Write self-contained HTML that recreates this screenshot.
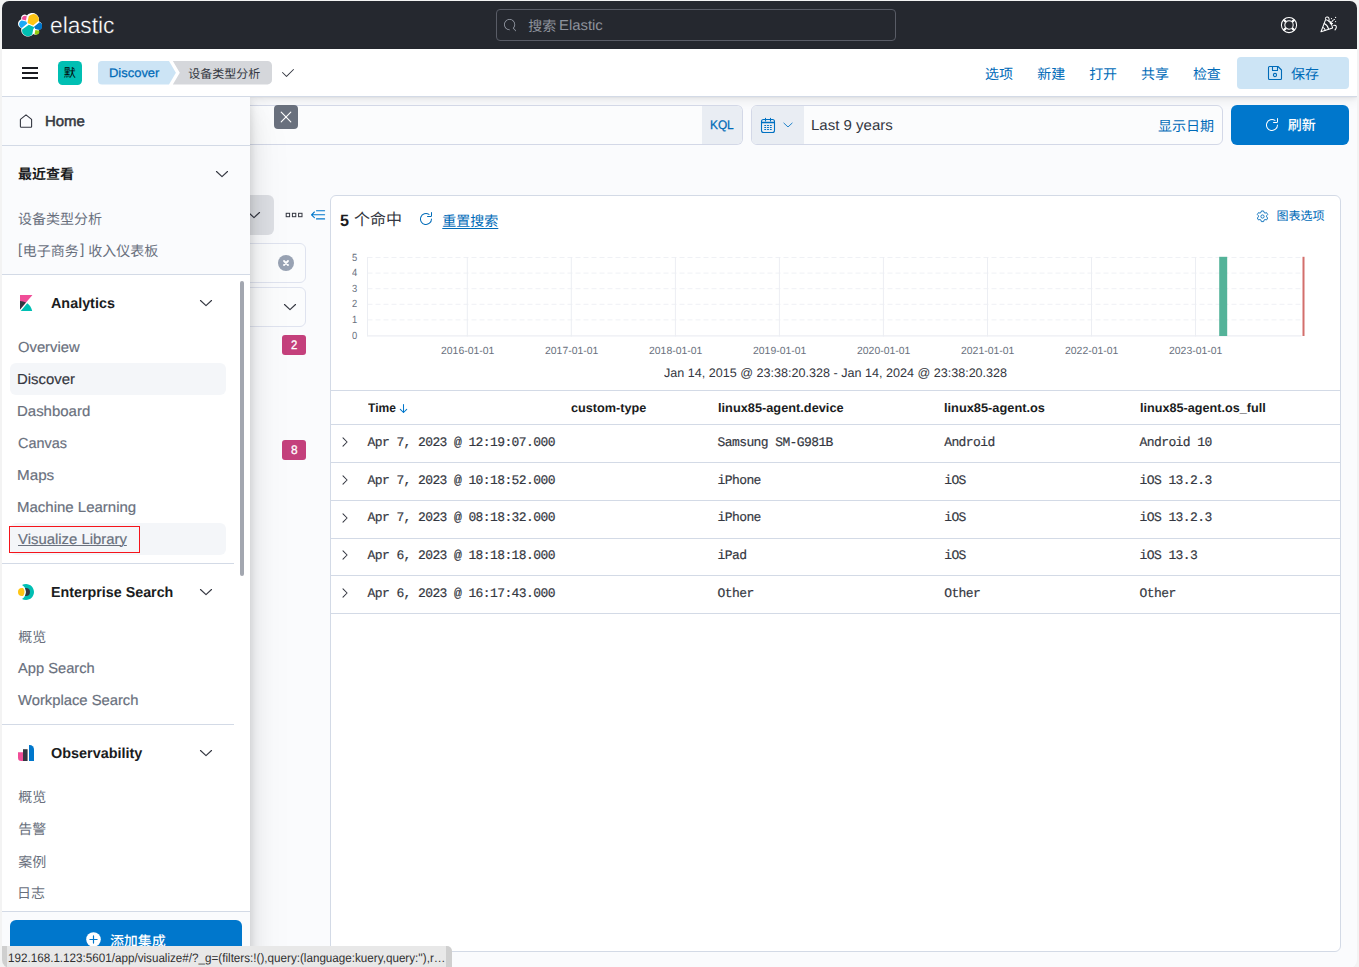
<!DOCTYPE html>
<html lang="zh-CN">
<head>
<meta charset="utf-8">
<title>Discover - 设备类型分析 - Elastic</title>
<style>
html,body{margin:0;padding:0}
body{width:1359px;height:967px;overflow:hidden;position:relative;background:#f3f3f3;font-family:"Liberation Sans",sans-serif;font-size:14px;color:#343741}
#win{position:absolute;left:2px;top:1px;width:1355px;height:967px;border-radius:7px 7px 8px 8px;overflow:hidden;background:#fafbfd}
#app{position:absolute;left:-2px;top:-1px;width:1359px;height:967px}
#app div,#app svg.ic,#app .t,#app .cj{position:absolute;box-sizing:border-box}
.t{text-rendering:geometricPrecision;white-space:pre;transform-origin:0 0;line-height:1;font-family:"Liberation Sans",sans-serif;font-weight:400}
.t.m{font-family:"Liberation Mono",monospace}
.cj{display:block;overflow:visible}
.cjt{text-rendering:geometricPrecision;position:absolute;left:1.5px;top:2px;white-space:pre;line-height:1;font-family:"Liberation Sans","Noto Sans CJK SC",sans-serif}
a{color:inherit;text-decoration:none}

</style>
</head>
<body>
<div id="win"><div id="app">
<div style="left:2px;top:1px;width:1355px;height:48px;background:#25282f"></div>
<div style="left:496px;top:9px;width:400px;height:32px;border:1px solid #595c66;border-radius:4px;background:#25282f"></div>
<svg class="ic" style="left:18px;top:12.8px;" width="24.2" height="24.4" viewBox="2 0 30 32" preserveAspectRatio="none"><path fill="#fff" d="M32 16.77a6.33 6.33 0 0 0-1.14-3.63 6.3 6.3 0 0 0-3.04-2.32c.16-.82.24-1.65.24-2.49a8.26 8.26 0 0 0-1.57-4.87A8.35 8.35 0 0 0 22.4.38a8.3 8.3 0 0 0-5.11-.08 8.29 8.29 0 0 0-4.19 2.94 4.41 4.41 0 0 0-5.42-.13 4.45 4.45 0 0 0-1.59 2.24 4.42 4.42 0 0 0 .03 2.71A6.37 6.37 0 0 0 3.15 10.4 6.37 6.37 0 0 0 2 14.04c-.01 1.31.39 2.59 1.14 3.66a6.33 6.33 0 0 0 3.06 2.32c-.16.82-.24 1.65-.24 2.48a8.25 8.25 0 0 0 1.57 4.86 8.26 8.26 0 0 0 4.12 3.02 8.3 8.3 0 0 0 5.1.07 8.29 8.29 0 0 0 4.18-2.93 4.38 4.38 0 0 0 2.51.95 4.42 4.42 0 0 0 2.68-.79 4.41 4.41 0 0 0 1.6-2.24 4.4 4.4 0 0 0-.02-2.71 6.37 6.37 0 0 0 2.97-2.34A6.36 6.36 0 0 0 32 16.77"/><path fill="#fec514" d="M13.8 13.2l6.9 3.15 7.05-6.17a7.2 7.2 0 0 0 .15-1.5 7.1 7.1 0 0 0-1.26-4.06 7.1 7.1 0 0 0-7.8-2.8 7.13 7.13 0 0 0-3.46 2.4l-1.17 6.06z"/><path fill="#00bfb3" d="M7.2 21.75a7.3 7.3 0 0 0-.15 1.53c0 1.46.45 2.89 1.28 4.09a7.17 7.17 0 0 0 7.86 2.82 7.18 7.18 0 0 0 3.47-2.45l1.16-6.06 1.55-2.96-6.93-3.16z"/><path fill="#f04e98" d="M7.15 8.6l4.73 1.12 1.04-5.38a3.73 3.73 0 0 0-4.44-.08A3.75 3.75 0 0 0 7.15 8.6"/><path fill="#1ba9f5" d="M6.74 9.73a5.3 5.3 0 0 0-2.52 1.92 5.33 5.33 0 0 0-.02 6.14 5.3 5.3 0 0 0 2.57 1.97l6.64-6-1.22-2.6z"/><path fill="#93c90e" d="M22.54 27.65a3.74 3.74 0 0 0 5.76-1.9 3.72 3.72 0 0 0-.01-2.34l-4.72-1.1z"/><path fill="#0077cc" d="M23.5 21.06l5.2 1.21a5.35 5.35 0 0 0 2.54-1.91 5.33 5.33 0 0 0 .02-6.15 5.33 5.33 0 0 0-2.57-1.97l-6.8 5.96z"/></svg>
<span class="t" style="left:50.30px;top:14.20px;font-size:23px;color:#fff;transform:scaleX(0.9893);-webkit-text-stroke:.35px #25282f;">elastic</span>
<svg class="ic" style="left:503.6px;top:19.3px;" width="12.8" height="12.8" viewBox="0 0 16 16" preserveAspectRatio="none"><path fill="#969ba6" d="M11.271 11.978l3.872 3.873a.502.502 0 0 0 .708 0 .502.502 0 0 0 0-.708l-3.565-3.564c2.38-2.747 2.267-6.923-.342-9.532-2.73-2.73-7.17-2.73-9.898 0-2.728 2.729-2.728 7.17 0 9.9a6.955 6.955 0 0 0 4.949 2.05.5.5 0 0 0 0-1 5.96 5.96 0 0 1-4.242-1.757 6.01 6.01 0 0 1 0-8.486 6.004 6.004 0 0 1 8.484 0 6.01 6.01 0 0 1 0 8.486.5.5 0 0 0 .034.738z"/></svg>
<span class="cj" style="left:526.71px;top:16.74px;width:30.59px;height:16.92px"><span class="cjt" style="font-size:14px;color:#8d929c">搜索</span></span>
<span class="t" style="left:558.97px;top:19.40px;font-size:14.5px;color:#8d929c;transform:scaleX(1.0252);">Elastic</span>
<svg class="ic" style="left:1280px;top:16px;" width="18" height="18" viewBox="0 0 18 18" preserveAspectRatio="none"><g fill="none" stroke="#fff"><circle cx="9" cy="9" r="7.6" stroke-width="1.05"/><circle cx="9" cy="9" r="4.2" stroke-width="1.05"/><path d="M5.9 5.9L3.7 3.7M12.1 5.9L14.3 3.7M5.9 12.1L3.7 14.3M12.1 12.1L14.3 14.3" stroke-width="2.3"/></g></svg>
<svg class="ic" style="left:1320px;top:16px;" width="18" height="18" viewBox="0 0 18 18" preserveAspectRatio="none"><g fill="none" stroke="#fff" stroke-width="1.05" stroke-linecap="round" stroke-linejoin="round"><path d="M5.6 3.6C9.4 4.6 11.8 7.6 12.6 11.9L1 15.8Z"/><path d="M4.2 7.6C6.4 8.6 8 10.6 8.6 13.2M2.8 11.4C4 12 4.9 13 5.3 14.3"/><path d="M5.4 2.4C5.6 1 7.8 .4 8.7 1.7C9.3 2.7 9.2 4.2 9 5.4"/><path d="M13.7 9.4C15 8.8 16.7 9.6 16.3 11.4C16.1 12.4 15.6 13.2 15 13.9"/><path d="M13.3 4L10.4 7.5M10.3 5.4L10.3 7.6L12.5 7.6"/></g><g fill="#fff"><circle cx="11.5" cy="2.6" r=".6"/><circle cx="14.4" cy="3.5" r=".6"/><circle cx="15.6" cy="1.4" r=".6"/><circle cx="15.6" cy="5.6" r=".6"/></g></svg>
<div style="left:2px;top:49px;width:1355px;height:48px;background:#fff;border-bottom:1px solid #d3dae6;box-shadow:0 .7px 1.4px rgba(0,0,0,.07),0 1.9px 4px rgba(0,0,0,.05),0 4.5px 10px rgba(0,0,0,.05)"></div>
<div style="left:22px;top:67px;width:16px;height:2px;background:#1a1c21"></div>
<div style="left:22px;top:72px;width:16px;height:2px;background:#1a1c21"></div>
<div style="left:22px;top:77px;width:16px;height:2px;background:#1a1c21"></div>
<div style="left:58px;top:61px;width:24px;height:24px;background:#00bfb3;border-radius:4.5px"></div>
<svg class="ic" style="left:98px;top:61px;" width="180" height="24" viewBox="0 0 180 24" preserveAspectRatio="none"><path d="M4 0H71L77.9 11.7L71 23.4H4A4 4 0 0 1 0 19.4V4A4 4 0 0 1 4 0Z" fill="#cce4f5"/><path d="M74.85 0H169.5A4.5 4.5 0 0 1 174 4.5V18.9A4.5 4.5 0 0 1 169.5 23.4H74.85L81.8 11.7Z" fill="#d5d7db"/></svg>
<div style="left:1237px;top:57px;width:112px;height:32px;background:#cce4f5;border-radius:4px"></div>
<span class="cj" style="left:62.22px;top:65.21px;width:15.36px;height:14.98px"><span class="cjt" style="font-size:12px;color:#000">默</span></span>
<span class="t" style="left:109.25px;top:66.90px;font-size:12.4px;color:#006bb8;transform:scaleX(1.0453);-webkit-text-stroke:0.25px #006bb8;">Discover</span>
<span class="cj" style="left:186.82px;top:65.54px;width:74.96px;height:15.11px"><span class="cjt" style="font-size:12px;color:#343741">设备类型分析</span></span>
<svg class="ic" style="left:280px;top:65px;" width="16" height="16" viewBox="0 0 16 16" preserveAspectRatio="none"><path fill="#343741" d="M6.5 12a.502.502 0 0 1-.354-.146l-4-4a.502.502 0 0 1 .708-.708L6.5 10.793l6.646-6.647a.502.502 0 0 1 .708.708l-7 7A.502.502 0 0 1 6.5 12"/></svg>
<span class="cj" style="left:983.59px;top:64.84px;width:30.82px;height:16.82px"><span class="cjt" style="font-size:14px;color:#006bb8">选项</span></span>
<span class="cj" style="left:1035.65px;top:64.78px;width:30.89px;height:16.94px"><span class="cjt" style="font-size:14px;color:#006bb8">新建</span></span>
<span class="cj" style="left:1087.63px;top:64.78px;width:30.74px;height:16.94px"><span class="cjt" style="font-size:14px;color:#006bb8">打开</span></span>
<span class="cj" style="left:1139.60px;top:64.75px;width:30.60px;height:17.01px"><span class="cjt" style="font-size:14px;color:#006bb8">共享</span></span>
<span class="cj" style="left:1191.38px;top:64.77px;width:31.03px;height:16.96px"><span class="cjt" style="font-size:14px;color:#006bb8">检查</span></span>
<svg class="ic" style="left:1267px;top:65px;" width="16" height="16" viewBox="0 0 16 16" preserveAspectRatio="none"><g fill="none" stroke="#006bb8" stroke-width="1.1" stroke-linejoin="round"><path d="M2.5 1.5H11L14.5 5V13.5A1 1 0 0 1 13.5 14.5H2.5A1 1 0 0 1 1.5 13.5V2.5A1 1 0 0 1 2.5 1.5Z"/><path d="M5.5 1.5V5.5H10.5V1.5"/><circle cx="8" cy="10" r="1.6"/></g></svg>
<span class="cj" style="left:1289.46px;top:64.61px;width:31.08px;height:16.88px"><span class="cjt" style="font-size:14px;color:#006bb8">保存</span></span>
<div style="left:2px;top:105px;width:741px;height:40px;background:#fbfcfd;border:1px solid #d3d8e7;border-left:none;border-radius:0 6px 6px 0"></div>
<div style="left:702px;top:106px;width:40px;height:38px;background:#e9edf3;border-radius:0 5px 5px 0"></div>
<div style="left:751px;top:105px;width:472px;height:40px;background:#fbfcfd;border:1px solid #d3d8e7;border-radius:6px"></div>
<div style="left:752px;top:106px;width:52px;height:38px;background:#e9edf3;border-radius:5px 0 0 5px"></div>
<div style="left:1231px;top:105px;width:118px;height:40px;background:#0077cc;border-radius:6px"></div>
<span class="t" style="left:710.05px;top:119.30px;font-size:12.4px;color:#006bb8;transform:scaleX(0.9539);-webkit-text-stroke:0.3px #006bb8;">KQL</span>
<svg class="ic" style="left:760px;top:117px;" width="16" height="17" viewBox="0 0 16 17" preserveAspectRatio="none"><g fill="none" stroke="#0071c2" stroke-width="1.1"><rect x="1.5" y="2.5" width="13" height="13" rx="2"/><path d="M1.5 5.5H14.5" stroke-width="1.3"/><path d="M5.5 1.4V3.9M10.5 1.4V3.9" stroke-linecap="round"/><path d="M4.3 8.5H6.1M7.1 8.5H8.9M9.9 8.5H11.7M4.3 10.5H6.1M7.1 10.5H8.9M9.9 10.5H11.7M4.3 12.5H6.1M7.1 12.5H8.9M9.9 12.5H11.7" stroke-width="1"/></g></svg>
<svg class="ic" style="left:782px;top:119px;" width="12" height="12" viewBox="0 0 16 16" preserveAspectRatio="none"><path d="M2.5 5.5L8 10.6L13.5 5.5" fill="none" stroke="#0071c2" stroke-width="1.15" stroke-linecap="round" stroke-linejoin="round"/></svg>
<span class="t" style="left:810.96px;top:118.50px;font-size:14.5px;color:#343741;transform:scaleX(1.0356);">Last 9 years</span>
<span class="cj" style="left:1156.59px;top:116.62px;width:58.42px;height:16.77px"><span class="cjt" style="font-size:14px;color:#006bb8">显示日期</span></span>
<svg class="ic" style="left:1264px;top:117px;" width="16" height="16" viewBox="0 0 16 16" preserveAspectRatio="none"><path fill="#fff" d="M11.228 2.942a.5.5 0 1 1-.538.842A5 5 0 1 0 13 8a.5.5 0 1 1 1 0 6 6 0 1 1-2.772-5.058zM14 1.5v3A1.5 1.5 0 0 1 12.5 6h-3a.5.5 0 0 1 0-1h3a.5.5 0 0 0 .5-.5v-3a.5.5 0 1 1 1 0z"/></svg>
<span class="cj" style="left:1286.34px;top:116.48px;width:31.12px;height:17.05px"><span class="cjt" style="font-size:14px;color:#fff;font-weight:500">刷新</span></span>
<div style="left:200px;top:195px;width:74px;height:40px;background:#dddfe4;border-radius:6px"></div>
<div style="left:150px;top:243px;width:156px;height:40px;background:#fbfcfd;border:1px solid #dfe3ef;border-radius:6px"></div>
<div style="left:150px;top:287px;width:156px;height:40px;background:#fbfcfd;border:1px solid #dfe3ef;border-radius:6px"></div>
<div style="left:282px;top:335px;width:24px;height:20px;background:#c4407c;border-radius:3px"></div>
<div style="left:282px;top:440px;width:24px;height:20px;background:#c4407c;border-radius:3px"></div>
<svg class="ic" style="left:246px;top:207px;" width="16" height="16" viewBox="0 0 16 16" preserveAspectRatio="none"><path d="M2.5 5.5L8 10.6L13.5 5.5" fill="none" stroke="#343741" stroke-width="1.15" stroke-linecap="round" stroke-linejoin="round"/></svg>
<svg class="ic" style="left:285px;top:212px;" width="18" height="6" viewBox="0 0 18 6" preserveAspectRatio="none"><g fill="none" stroke="#343741" stroke-width="1"><rect x="1.2" y="1.3" width="3.4" height="3.4"/><rect x="7.4" y="1.3" width="3.4" height="3.4"/><rect x="13.6" y="1.3" width="3.4" height="3.4"/></g></svg>
<svg class="ic" style="left:309px;top:208px;" width="18" height="14" viewBox="0 0 18 14" preserveAspectRatio="none"><g fill="none" stroke="#0077cc" stroke-width="1.1" stroke-linecap="round" stroke-linejoin="round"><path d="M7.5 2.7H15.6M2.6 6.8H15.6M7.5 10.9H15.6M5.4 4L2.5 6.8L5.4 9.6"/></g></svg>
<svg class="ic" style="left:278px;top:255px;" width="16" height="16" viewBox="0 0 16 16" preserveAspectRatio="none"><circle cx="8" cy="8" r="8" fill="#98a2b3"/><path d="M6 6L10 10M10 6L6 10" stroke="#fff" stroke-width="1.8" stroke-linecap="round"/></svg>
<svg class="ic" style="left:282px;top:299px;" width="16" height="16" viewBox="0 0 16 16" preserveAspectRatio="none"><path d="M2.5 5.5L8 10.6L13.5 5.5" fill="none" stroke="#343741" stroke-width="1.15" stroke-linecap="round" stroke-linejoin="round"/></svg>
<span class="t" style="left:290.80px;top:339.00px;font-size:12.4px;color:#fff;transform:scaleX(0.9143);-webkit-text-stroke:0.3px #fff;">2</span>
<span class="t" style="left:290.70px;top:444.00px;font-size:12.4px;color:#fff;transform:scaleX(0.9571);-webkit-text-stroke:0.3px #fff;">8</span>
<div style="left:330px;top:195px;width:1011px;height:757px;background:#fff;border:1px solid #d3dae6;border-radius:6px"></div>
<svg class="ic" style="left:0px;top:0px;" width="1359" height="400" viewBox="0 0 1359 400" preserveAspectRatio="none"><line x1="367.5" y1="257.5" x2="1301.5" y2="257.5" stroke="#eff1f5" stroke-width="1" stroke-dasharray="5 3"/><line x1="367.5" y1="273.1" x2="1301.5" y2="273.1" stroke="#eff1f5" stroke-width="1" stroke-dasharray="5 3"/><line x1="367.5" y1="288.7" x2="1301.5" y2="288.7" stroke="#eff1f5" stroke-width="1" stroke-dasharray="5 3"/><line x1="367.5" y1="304.3" x2="1301.5" y2="304.3" stroke="#eff1f5" stroke-width="1" stroke-dasharray="5 3"/><line x1="367.5" y1="319.9" x2="1301.5" y2="319.9" stroke="#eff1f5" stroke-width="1" stroke-dasharray="5 3"/><line x1="367.5" y1="335.9" x2="1301.5" y2="335.9" stroke="#eceef3" stroke-width="1.2"/><line x1="367.5" y1="257.0" x2="367.5" y2="336.5" stroke="#eceef3" stroke-width="1"/><line x1="467.3" y1="257.0" x2="467.3" y2="336.5" stroke="#eceef3" stroke-width="1"/><line x1="571.3" y1="257.0" x2="571.3" y2="336.5" stroke="#eceef3" stroke-width="1"/><line x1="675.4" y1="257.0" x2="675.4" y2="336.5" stroke="#eceef3" stroke-width="1"/><line x1="779.4" y1="257.0" x2="779.4" y2="336.5" stroke="#eceef3" stroke-width="1"/><line x1="883.4" y1="257.0" x2="883.4" y2="336.5" stroke="#eceef3" stroke-width="1"/><line x1="987.5" y1="257.0" x2="987.5" y2="336.5" stroke="#eceef3" stroke-width="1"/><line x1="1091.5" y1="257.0" x2="1091.5" y2="336.5" stroke="#eceef3" stroke-width="1"/><line x1="1195.5" y1="257.0" x2="1195.5" y2="336.5" stroke="#eceef3" stroke-width="1"/><rect x="1219.2" y="256.8" width="8" height="79.2" fill="#54b399"/><rect x="1302.5" y="256.8" width="2" height="79.2" fill="#d36f6c"/></svg>
<div style="left:331px;top:390px;width:1009px;height:1px;background:#d3dae6"></div>
<div style="left:331px;top:424.2px;width:1009px;height:1px;background:#d3dae6"></div>
<div style="left:331px;top:462.0px;width:1009px;height:1px;background:#d3dae6"></div>
<div style="left:331px;top:499.8px;width:1009px;height:1px;background:#d3dae6"></div>
<div style="left:331px;top:537.6px;width:1009px;height:1px;background:#d3dae6"></div>
<div style="left:331px;top:575.4px;width:1009px;height:1px;background:#d3dae6"></div>
<div style="left:331px;top:613.2px;width:1009px;height:1px;background:#d3dae6"></div>
<span class="t" style="left:340.00px;top:212.80px;font-size:16.5px;color:#1a1c21;font-weight:700;transform:scaleX(0.9778);">5</span>
<span class="cj" style="left:352.56px;top:211.44px;width:49.87px;height:18.93px"><span class="cjt" style="font-size:16px;color:#343741">个命中</span></span>
<svg class="ic" style="left:418px;top:211px;" width="16" height="16" viewBox="0 0 16 16" preserveAspectRatio="none"><path fill="#006bb8" d="M11.228 2.942a.5.5 0 1 1-.538.842A5 5 0 1 0 13 8a.5.5 0 1 1 1 0 6 6 0 1 1-2.772-5.058zM14 1.5v3A1.5 1.5 0 0 1 12.5 6h-3a.5.5 0 0 1 0-1h3a.5.5 0 0 0 .5-.5v-3a.5.5 0 1 1 1 0z"/></svg>
<span class="cj" style="left:440.80px;top:211.54px;width:58.40px;height:16.92px"><span class="cjt" style="font-size:14px;color:#006bb8;text-decoration:underline;text-decoration-thickness:1px;text-underline-offset:1.5px">重置搜索</span></span>
<svg class="ic" style="left:1255.5px;top:209.6px;" width="13" height="13" viewBox="0 0 16 16" preserveAspectRatio="none"><g fill="none" stroke="#006bb8" stroke-width="1.1" stroke-linejoin="round"><path d="M6.6 1.2h2.8l.5 1.9 1.2.7 1.9-.55 1.4 2.4-1.4 1.4v1.4l1.4 1.4-1.4 2.4-1.9-.55-1.2.7-.5 1.9H6.6l-.5-1.9-1.2-.7-1.9.55-1.4-2.4 1.4-1.4V7.05l-1.4-1.4 1.4-2.4 1.9.55 1.2-.7z"/><circle cx="8" cy="8" r="2"/></g></svg>
<span class="cj" style="left:1274.94px;top:208.18px;width:50.52px;height:15.04px"><span class="cjt" style="font-size:12px;color:#006bb8">图表选项</span></span>
<span class="t" style="left:351.80px;top:253.60px;font-size:10.4px;color:#69707d;transform:scaleX(0.9000);">5</span>
<span class="t" style="left:351.80px;top:269.20px;font-size:10.4px;color:#69707d;transform:scaleX(0.9000);">4</span>
<span class="t" style="left:351.80px;top:284.80px;font-size:10.4px;color:#69707d;transform:scaleX(0.9000);">3</span>
<span class="t" style="left:351.80px;top:300.40px;font-size:10.4px;color:#69707d;transform:scaleX(0.9000);">2</span>
<span class="t" style="left:351.80px;top:316.00px;font-size:10.4px;color:#69707d;transform:scaleX(0.9000);">1</span>
<span class="t" style="left:351.80px;top:331.60px;font-size:10.4px;color:#69707d;transform:scaleX(0.9000);">0</span>
<span class="t" style="left:440.70px;top:347.00px;font-size:10.4px;color:#69707d;transform:scaleX(1.0043);">2016-01-01</span>
<span class="t" style="left:544.73px;top:347.00px;font-size:10.4px;color:#69707d;transform:scaleX(1.0043);">2017-01-01</span>
<span class="t" style="left:648.76px;top:347.00px;font-size:10.4px;color:#69707d;transform:scaleX(1.0043);">2018-01-01</span>
<span class="t" style="left:752.79px;top:347.00px;font-size:10.4px;color:#69707d;transform:scaleX(1.0043);">2019-01-01</span>
<span class="t" style="left:856.82px;top:347.00px;font-size:10.4px;color:#69707d;transform:scaleX(1.0043);">2020-01-01</span>
<span class="t" style="left:960.85px;top:347.00px;font-size:10.4px;color:#69707d;transform:scaleX(1.0043);">2021-01-01</span>
<span class="t" style="left:1064.88px;top:347.00px;font-size:10.4px;color:#69707d;transform:scaleX(1.0043);">2022-01-01</span>
<span class="t" style="left:1168.91px;top:347.00px;font-size:10.4px;color:#69707d;transform:scaleX(1.0043);">2023-01-01</span>
<span class="t" style="left:664.10px;top:367.10px;font-size:12.4px;color:#343741;transform:scaleX(1.0153);">Jan 14, 2015 @ 23:38:20.328 - Jan 14, 2024 @ 23:38:20.328</span>
<span class="t" style="left:368.00px;top:402.00px;font-size:12.4px;color:#1a1c21;font-weight:700;transform:scaleX(0.9721);">Time</span>
<svg class="ic" style="left:398px;top:403px;" width="11" height="11" viewBox="0 0 11 11" preserveAspectRatio="none"><path d="M5.5 1.6V9.4M2.3 6.3L5.5 9.5L8.7 6.3" fill="none" stroke="#0077cc" stroke-width="1.05" stroke-linecap="round" stroke-linejoin="round"/></svg>
<span class="t" style="left:570.50px;top:402.00px;font-size:12.4px;color:#1a1c21;font-weight:700;transform:scaleX(1.0234);">custom-type</span>
<span class="t" style="left:718.00px;top:402.00px;font-size:12.4px;color:#1a1c21;font-weight:700;transform:scaleX(1.0304);">linux85-agent.device</span>
<span class="t" style="left:944.00px;top:402.00px;font-size:12.4px;color:#1a1c21;font-weight:700;transform:scaleX(1.0329);">linux85-agent.os</span>
<span class="t" style="left:1139.80px;top:402.00px;font-size:12.4px;color:#1a1c21;font-weight:700;transform:scaleX(1.0196);">linux85-agent.os_full</span>
<svg class="ic" style="left:339px;top:436.0px;" width="12" height="12" viewBox="0 0 12 12" preserveAspectRatio="none"><path d="M4 1.9L8.1 6L4 10.1" fill="none" stroke="#343741" stroke-width="1.05" stroke-linecap="round" stroke-linejoin="round"/></svg>
<span class="t m" style="left:367.60px;top:435.90px;font-size:13px;color:#343741;-webkit-text-stroke:0.18px #343741;letter-spacing:-0.6px;">Apr 7, 2023 @ 12:19:07.000</span>
<span class="t m" style="left:717.60px;top:435.90px;font-size:13px;color:#343741;-webkit-text-stroke:0.18px #343741;letter-spacing:-0.6px;">Samsung SM-G981B</span>
<span class="t m" style="left:944.20px;top:435.90px;font-size:13px;color:#343741;-webkit-text-stroke:0.18px #343741;letter-spacing:-0.6px;">Android</span>
<span class="t m" style="left:1139.60px;top:435.90px;font-size:13px;color:#343741;-webkit-text-stroke:0.18px #343741;letter-spacing:-0.6px;">Android 10</span>
<svg class="ic" style="left:339px;top:473.78px;" width="12" height="12" viewBox="0 0 12 12" preserveAspectRatio="none"><path d="M4 1.9L8.1 6L4 10.1" fill="none" stroke="#343741" stroke-width="1.05" stroke-linecap="round" stroke-linejoin="round"/></svg>
<span class="t m" style="left:367.60px;top:473.68px;font-size:13px;color:#343741;-webkit-text-stroke:0.18px #343741;letter-spacing:-0.6px;">Apr 7, 2023 @ 10:18:52.000</span>
<span class="t m" style="left:717.60px;top:473.68px;font-size:13px;color:#343741;-webkit-text-stroke:0.18px #343741;letter-spacing:-0.6px;">iPhone</span>
<span class="t m" style="left:944.20px;top:473.68px;font-size:13px;color:#343741;-webkit-text-stroke:0.18px #343741;letter-spacing:-0.6px;">iOS</span>
<span class="t m" style="left:1139.60px;top:473.68px;font-size:13px;color:#343741;-webkit-text-stroke:0.18px #343741;letter-spacing:-0.6px;">iOS 13.2.3</span>
<svg class="ic" style="left:339px;top:511.56000000000006px;" width="12" height="12" viewBox="0 0 12 12" preserveAspectRatio="none"><path d="M4 1.9L8.1 6L4 10.1" fill="none" stroke="#343741" stroke-width="1.05" stroke-linecap="round" stroke-linejoin="round"/></svg>
<span class="t m" style="left:367.60px;top:511.46px;font-size:13px;color:#343741;-webkit-text-stroke:0.18px #343741;letter-spacing:-0.6px;">Apr 7, 2023 @ 08:18:32.000</span>
<span class="t m" style="left:717.60px;top:511.46px;font-size:13px;color:#343741;-webkit-text-stroke:0.18px #343741;letter-spacing:-0.6px;">iPhone</span>
<span class="t m" style="left:944.20px;top:511.46px;font-size:13px;color:#343741;-webkit-text-stroke:0.18px #343741;letter-spacing:-0.6px;">iOS</span>
<span class="t m" style="left:1139.60px;top:511.46px;font-size:13px;color:#343741;-webkit-text-stroke:0.18px #343741;letter-spacing:-0.6px;">iOS 13.2.3</span>
<svg class="ic" style="left:339px;top:549.34px;" width="12" height="12" viewBox="0 0 12 12" preserveAspectRatio="none"><path d="M4 1.9L8.1 6L4 10.1" fill="none" stroke="#343741" stroke-width="1.05" stroke-linecap="round" stroke-linejoin="round"/></svg>
<span class="t m" style="left:367.60px;top:549.24px;font-size:13px;color:#343741;-webkit-text-stroke:0.18px #343741;letter-spacing:-0.6px;">Apr 6, 2023 @ 18:18:18.000</span>
<span class="t m" style="left:717.60px;top:549.24px;font-size:13px;color:#343741;-webkit-text-stroke:0.18px #343741;letter-spacing:-0.6px;">iPad</span>
<span class="t m" style="left:944.20px;top:549.24px;font-size:13px;color:#343741;-webkit-text-stroke:0.18px #343741;letter-spacing:-0.6px;">iOS</span>
<span class="t m" style="left:1139.60px;top:549.24px;font-size:13px;color:#343741;-webkit-text-stroke:0.18px #343741;letter-spacing:-0.6px;">iOS 13.3</span>
<svg class="ic" style="left:339px;top:587.12px;" width="12" height="12" viewBox="0 0 12 12" preserveAspectRatio="none"><path d="M4 1.9L8.1 6L4 10.1" fill="none" stroke="#343741" stroke-width="1.05" stroke-linecap="round" stroke-linejoin="round"/></svg>
<span class="t m" style="left:367.60px;top:587.02px;font-size:13px;color:#343741;-webkit-text-stroke:0.18px #343741;letter-spacing:-0.6px;">Apr 6, 2023 @ 16:17:43.000</span>
<span class="t m" style="left:717.60px;top:587.02px;font-size:13px;color:#343741;-webkit-text-stroke:0.18px #343741;letter-spacing:-0.6px;">Other</span>
<span class="t m" style="left:944.20px;top:587.02px;font-size:13px;color:#343741;-webkit-text-stroke:0.18px #343741;letter-spacing:-0.6px;">Other</span>
<span class="t m" style="left:1139.60px;top:587.02px;font-size:13px;color:#343741;-webkit-text-stroke:0.18px #343741;letter-spacing:-0.6px;">Other</span>
<div style="left:0px;top:97px;width:1359px;height:871px;overflow:hidden;pointer-events:none"><div style="left:2px;top:0px;width:248px;height:871px;background:#fff;box-shadow:0 2.7px 9px rgba(0,0,0,.13),0 9.4px 24px rgba(0,0,0,.09),0 21.8px 43px rgba(0,0,0,.08)"></div></div>
<div style="left:2px;top:97px;width:248px;height:49px;background:#fafbfd;border-bottom:1px solid #d3dae6"></div>
<div style="left:2px;top:146px;width:248px;height:129px;background:#fafbfd;border-bottom:1px solid #d3dae6"></div>
<div style="left:10px;top:363px;width:216px;height:32px;background:#f4f6f9;border-radius:6px"></div>
<div style="left:10px;top:523px;width:216px;height:32px;background:#f4f6f9;border-radius:6px"></div>
<div style="left:9px;top:526px;width:131px;height:27px;border:1px solid #f5141b"></div>
<div style="left:2px;top:563px;width:232px;height:1px;background:#d3dae6"></div>
<div style="left:2px;top:724px;width:232px;height:1px;background:#d3dae6"></div>
<div style="left:240px;top:281px;width:4px;height:295px;background:#a3a7b0;border-radius:2px"></div>
<svg class="ic" style="left:17.5px;top:112.5px;" width="16" height="16" viewBox="0 0 16 16" preserveAspectRatio="none"><path d="M8 1.8L13.6 6.4V13.4A.9.9 0 0 1 12.7 14.3H3.3A.9.9 0 0 1 2.4 13.4V6.4Z" fill="none" stroke="#343741" stroke-width="1.1" stroke-linejoin="round"/></svg>
<span class="t" style="left:45.37px;top:115.00px;font-size:14.5px;color:#343741;transform:scaleX(1.0315);-webkit-text-stroke:0.5px #343741;">Home</span>
<span class="cj" style="left:16.47px;top:165.41px;width:58.66px;height:17.19px"><span class="cjt" style="font-size:14px;color:#1a1c21;font-weight:700">最近查看</span></span>
<svg class="ic" style="left:214px;top:166px;" width="16" height="16" viewBox="0 0 16 16" preserveAspectRatio="none"><path d="M2.5 5.5L8 10.6L13.5 5.5" fill="none" stroke="#343741" stroke-width="1.15" stroke-linecap="round" stroke-linejoin="round"/></svg>
<span class="cj" style="left:16.41px;top:209.82px;width:86.78px;height:16.96px"><span class="cjt" style="font-size:14px;color:#69707d">设备类型分析</span></span>
<span class="t" style="left:18.00px;top:243.30px;font-size:14.5px;color:#69707d;">[</span>
<span class="cj" style="left:22.25px;top:241.93px;width:57.69px;height:16.94px"><span class="cjt" style="font-size:14px;color:#69707d;left:0.5px">电子商务</span></span>
<span class="t" style="left:80.20px;top:243.30px;font-size:14.5px;color:#69707d;">]</span>
<span class="cj" style="left:86.86px;top:241.95px;width:72.68px;height:16.91px"><span class="cjt" style="font-size:14px;color:#69707d">收入仪表板</span></span>
<svg class="ic" style="left:18px;top:295px;" width="16" height="16" viewBox="0 0 32 32" preserveAspectRatio="none"><path fill="#f04e98" d="M4 0v28.789L28.935.017z"/><path fill="#343741" d="M4 12v16.789l11.906-13.738A24.72 24.72 0 0 0 4 12"/><path fill="#00bfb3" d="M18.479 16.664L6.268 30.754l-1.073 1.237h23.191c-1.252-6.292-4.883-11.719-9.908-15.327"/></svg>
<span class="t" style="left:50.50px;top:297.00px;font-size:14.5px;color:#1a1c21;font-weight:700;transform:scaleX(0.9906);">Analytics</span>
<svg class="ic" style="left:198px;top:295px;" width="16" height="16" viewBox="0 0 16 16" preserveAspectRatio="none"><path d="M2.5 5.5L8 10.6L13.5 5.5" fill="none" stroke="#343741" stroke-width="1.15" stroke-linecap="round" stroke-linejoin="round"/></svg>
<span class="t" style="left:18.40px;top:341.00px;font-size:14.5px;color:#69707d;transform:scaleX(1.0188);-webkit-text-stroke:0.18px #69707d;">Overview</span>
<span class="t" style="left:17.37px;top:373.20px;font-size:14.5px;color:#343741;transform:scaleX(1.0275);-webkit-text-stroke:0.18px #343741;">Discover</span>
<span class="t" style="left:17.37px;top:405.20px;font-size:14.5px;color:#69707d;transform:scaleX(1.0319);-webkit-text-stroke:0.18px #69707d;">Dashboard</span>
<span class="t" style="left:18.40px;top:437.00px;font-size:14.5px;color:#69707d;transform:scaleX(0.9936);-webkit-text-stroke:0.18px #69707d;">Canvas</span>
<span class="t" style="left:17.35px;top:469.00px;font-size:14.5px;color:#69707d;transform:scaleX(1.0495);-webkit-text-stroke:0.18px #69707d;">Maps</span>
<span class="t" style="left:17.37px;top:501.00px;font-size:14.5px;color:#69707d;transform:scaleX(1.0341);-webkit-text-stroke:0.18px #69707d;">Machine Learning</span>
<span class="t" style="left:18.40px;top:532.80px;font-size:14.5px;color:#69707d;transform:scaleX(1.0256);-webkit-text-stroke:0.18px #69707d;text-decoration:underline;text-decoration-thickness:1px;text-underline-offset:1.2px;">Visualize Library</span>
<span class="t" style="left:18.40px;top:661.50px;font-size:14.5px;color:#69707d;transform:scaleX(1.0118);-webkit-text-stroke:0.18px #69707d;">App Search</span>
<span class="t" style="left:18.40px;top:694.00px;font-size:14.5px;color:#69707d;transform:scaleX(1.0191);-webkit-text-stroke:0.18px #69707d;">Workplace Search</span>
<svg class="ic" style="left:18px;top:584px;" width="16" height="16" viewBox="0 0 32 32" preserveAspectRatio="none"><path fill="#00bfb3" d="M16 0c-2.918 0-5.645.794-8 2.158 4.777 2.768 8 7.923 8 13.842 0 5.919-3.223 11.074-8 13.842A15.907 15.907 0 0 0 16 32c8.837 0 16-7.163 16-16S24.837 0 16 0z"/><path fill="#fec514" d="M8 24h2.222A12.996 12.996 0 0 0 13 16c0-2.935-1.012-5.744-2.778-8H8a8 8 0 0 0 0 16z"/><path fill="#343741" d="M16 8h-2.152A15.877 15.877 0 0 1 16 16c0 2.918-.786 5.647-2.152 8H16a8 8 0 0 0 0-16z"/></svg>
<span class="t" style="left:50.50px;top:586.00px;font-size:14.5px;color:#1a1c21;font-weight:700;transform:scaleX(0.9857);">Enterprise Search</span>
<svg class="ic" style="left:198px;top:584px;" width="16" height="16" viewBox="0 0 16 16" preserveAspectRatio="none"><path d="M2.5 5.5L8 10.6L13.5 5.5" fill="none" stroke="#343741" stroke-width="1.15" stroke-linecap="round" stroke-linejoin="round"/></svg>
<span class="cj" style="left:16.65px;top:627.53px;width:30.70px;height:16.94px"><span class="cjt" style="font-size:14px;color:#69707d">概览</span></span>
<svg class="ic" style="left:18px;top:745px;" width="16" height="16" viewBox="0 0 32 32" preserveAspectRatio="none"><path fill="#f04e98" d="M0 14.5h10V32H6.5A6.5 6.5 0 0 1 0 25.5z"/><path fill="#343741" d="M10 8.4h9.2V32H10z"/><path fill="#0077cc" d="M22 0h1.5A8.5 8.5 0 0 1 32 8.5V32H22z"/></svg>
<span class="t" style="left:50.50px;top:747.00px;font-size:14.5px;color:#1a1c21;font-weight:700;transform:scaleX(0.9945);">Observability</span>
<svg class="ic" style="left:198px;top:745px;" width="16" height="16" viewBox="0 0 16 16" preserveAspectRatio="none"><path d="M2.5 5.5L8 10.6L13.5 5.5" fill="none" stroke="#343741" stroke-width="1.15" stroke-linecap="round" stroke-linejoin="round"/></svg>
<span class="cj" style="left:16.65px;top:788.03px;width:30.70px;height:16.94px"><span class="cjt" style="font-size:14px;color:#69707d">概览</span></span>
<span class="cj" style="left:16.70px;top:820.18px;width:30.60px;height:17.03px"><span class="cjt" style="font-size:14px;color:#69707d">告警</span></span>
<span class="cj" style="left:16.77px;top:852.61px;width:30.46px;height:16.98px"><span class="cjt" style="font-size:14px;color:#69707d">案例</span></span>
<span class="cj" style="left:17.60px;top:884.24px;width:28.79px;height:16.73px"><span class="cjt" style="font-size:14px;color:#69707d;left:-0.5px">日志</span></span>
<div style="left:2px;top:911px;width:248px;height:57px;background:#fafbfd;border-top:1px solid #d3dae6"></div>
<div style="left:10px;top:920px;width:232px;height:40px;background:#0077cc;border-radius:6px"></div>
<svg class="ic" style="left:86px;top:932.3px;" width="15" height="15" viewBox="0 0 15 15" preserveAspectRatio="none"><circle cx="7.5" cy="7.5" r="7.3" fill="#fff"/><path d="M7.5 3.9V11.1M3.9 7.5H11.1" stroke="#0077cc" stroke-width="1.2" stroke-linecap="round"/></svg>
<span class="cj" style="left:108.38px;top:931.81px;width:59.03px;height:17.17px"><span class="cjt" style="font-size:14px;color:#fff;font-weight:500">添加集成</span></span>
<div style="left:274px;top:105px;width:24px;height:24px;background:#69707d;border-radius:4px"></div>
<svg class="ic" style="left:279px;top:110px;" width="14" height="14" viewBox="0 0 14 14" preserveAspectRatio="none"><path d="M2.2 2.2L11.8 11.8M11.8 2.2L2.2 11.8" stroke="#fff" stroke-width="1.15" stroke-linecap="round"/></svg>
<div style="left:2px;top:946.3px;width:449.5px;height:22px;background:#cfcfcf;border-top-right-radius:5px"></div>
<div style="left:6.8px;top:946.3px;width:439.4px;height:22px;background:#e8e8e8"></div>
<span class="t" style="left:8.00px;top:951.90px;font-size:12.3px;color:#303030;transform:scaleX(0.9480);">192.168.1.123:5601/app/visualize#/?_g=(filters:!(),query:(language:kuery,query:''),r…</span>
</div></div>
</body>
</html>
